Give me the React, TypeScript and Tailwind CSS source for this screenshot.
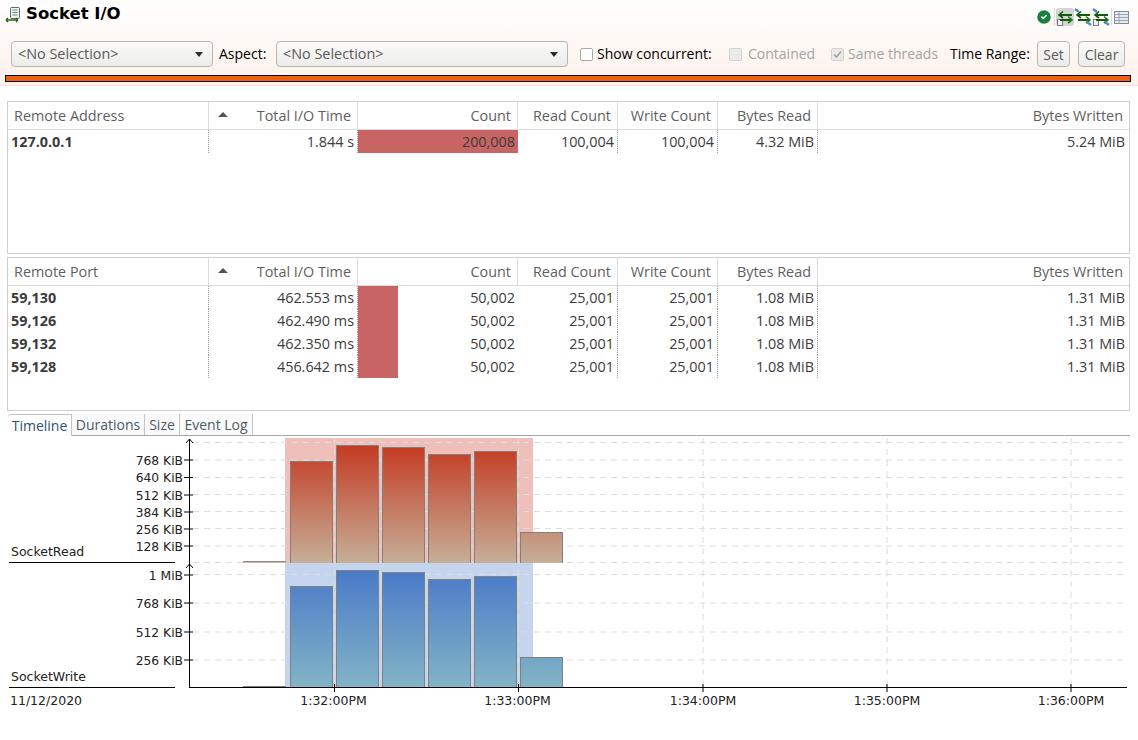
import React from 'react';
import { CheckCircle2 } from 'lucide-react';

const sans = "font-['Open_Sans','Noto_Sans',sans-serif]";

const columns = 'grid grid-cols-[201px_149px_160px_100px_100px_100px_1fr]';

interface Row {
  name: string;
  time: string;
  barWidth: number;
  count: string;
  reads: string;
  writes: string;
  bytesRead: string;
  bytesWritten: string;
}

const addressRows: Row[] = [
  { name: '127.0.0.1', time: '1.844 s', barWidth: 160, count: '200,008', reads: '100,004', writes: '100,004', bytesRead: '4.32 MiB', bytesWritten: '5.24 MiB' },
];

const portRows: Row[] = [
  { name: '59,130', time: '462.553 ms', barWidth: 40, count: '50,002', reads: '25,001', writes: '25,001', bytesRead: '1.08 MiB', bytesWritten: '1.31 MiB' },
  { name: '59,126', time: '462.490 ms', barWidth: 40, count: '50,002', reads: '25,001', writes: '25,001', bytesRead: '1.08 MiB', bytesWritten: '1.31 MiB' },
  { name: '59,132', time: '462.350 ms', barWidth: 40, count: '50,002', reads: '25,001', writes: '25,001', bytesRead: '1.08 MiB', bytesWritten: '1.31 MiB' },
  { name: '59,128', time: '456.642 ms', barWidth: 40, count: '50,002', reads: '25,001', writes: '25,001', bytesRead: '1.08 MiB', bytesWritten: '1.31 MiB' },
];

const HeaderCell: React.FC<{ label: string; left?: boolean; sort?: boolean }> = ({ label, left, sort }) => (
  <div className={`relative flex items-center border-r border-[#dcdcdc] px-[6px] last:border-r-0 ${left ? 'justify-start' : 'justify-end'}`}>
    {sort && <span className="absolute left-[9px] top-[10px] h-0 w-0 border-x-[5px] border-b-[5px] border-x-transparent border-b-[#555]" />}
    {label}
  </div>
);

const DataCell: React.FC<{ children: React.ReactNode; dotted?: boolean }> = ({ children, dotted }) => (
  <div className={`flex items-center justify-end pr-[3px] ${dotted ? 'border-r border-dotted border-[#999]' : 'pr-[4px]'}`}>{children}</div>
);

const DataTable: React.FC<{ first: string; rows: Row[]; height: string }> = ({ first, rows, height }) => (
  <div className={`mx-[7px] w-[1123px] border border-[#cfcfcf] bg-white text-[14.4px] ${height}`}>
    <div className={`${columns} h-[28px] border-b border-[#dcdcdc] text-[#5f5f5f]`}>
      <HeaderCell label={first} left />
      <HeaderCell label="Total I/O Time" sort />
      <HeaderCell label="Count" />
      <HeaderCell label="Read Count" />
      <HeaderCell label="Write Count" />
      <HeaderCell label="Bytes Read" />
      <HeaderCell label="Bytes Written" />
    </div>
    {rows.map((row) => (
      <div key={row.name} className={`${columns} h-[23px] text-[#3c3c3c]`}>
        <div className="flex items-center border-r border-dotted border-[#999] pl-[3px] font-bold">{row.name}</div>
        <DataCell dotted>{row.time}</DataCell>
        <div className="relative flex items-center justify-end pr-[3px]">
          <div className="absolute inset-y-0 left-0 bg-[#c96464]" style={{ width: row.barWidth }} />
          <span className="relative">{row.count}</span>
        </div>
        <DataCell dotted>{row.reads}</DataCell>
        <DataCell dotted>{row.writes}</DataCell>
        <DataCell dotted>{row.bytesRead}</DataCell>
        <DataCell>{row.bytesWritten}</DataCell>
      </div>
    ))}
  </div>
);

const Select: React.FC<{ width: string }> = ({ width }) => (
  <div className={`flex h-[26px] ${width} items-center justify-between rounded-[4px] border border-[#b9b6b2] bg-gradient-to-b from-[#fbfafa] to-[#ececea] pl-[6px] pr-[9px] text-[14.4px] text-[#5a5a5a]`}>
    <span>&lt;No Selection&gt;</span>
    <span className="h-0 w-0 border-x-[4px] border-t-[5px] border-x-transparent border-t-[#2c2c2c]" />
  </div>
);

const Check: React.FC<{ checked?: boolean; disabled?: boolean }> = ({ checked, disabled }) => (
  <span className={`flex h-[13px] w-[13px] items-center justify-center rounded-[2px] border ${disabled ? 'border-[#d4d2d0] bg-[#ebeae9]' : 'border-[#aaa8a6] bg-white'}`}>
    {checked && (
      <svg width="11" height="11" viewBox="0 0 11 11" fill="none" stroke="#a2a2a2" strokeWidth="1.6">
        <path d="M2 5.5 L4.5 8 L9 2.5" />
      </svg>
    )}
  </span>
);

const ToolButton: React.FC<{ label: string; width: string }> = ({ label, width }) => (
  <div className={`flex h-[26px] ${width} items-center justify-center rounded-[4px] border border-[#b9b6b2] bg-gradient-to-b from-[#fbfafa] to-[#ececea] text-[#5a5a5a]`}>{label}</div>
);

const ArrowsIcon: React.FC<{ wand?: boolean; page?: boolean }> = ({ wand, page }) => (
  <svg width="18" height="18" viewBox="0 0 18 18" fill="none">
    {page && <rect x="1.5" y="11.5" width="5" height="6" fill="#f1f1f1" stroke="#7a7a90" />}
    <path d="M4 7 H16 M4 12 H15" stroke="#0f5c0a" strokeWidth="1.8" />
    <path d="M7 3.5 L3 7 L7 10" stroke="#0f5c0a" strokeWidth="1.6" fill="none" />
    <path d="M12 8.5 L16 12 L12 15" stroke="#1d7a12" strokeWidth="1.6" fill="none" />
    {wand && (
      <>
        <path d="M1 1 L5 4" stroke="#4a90c8" strokeWidth="2.4" />
        <path d="M13 14 L17 17" stroke="#4a90c8" strokeWidth="2.4" />
      </>
    )}
  </svg>
);

const PageIcon = () => (
  <svg width="16" height="16" viewBox="0 0 16 16" fill="none">
    <rect x="5.5" y="0.5" width="9" height="11" rx="1" fill="#eef1f4" stroke="#5d6872" />
    <path d="M7.5 3 H12.5 M7.5 5.5 H12.5 M7.5 8 H12.5" stroke="#5f8f62" />
    <path d="M1 13 H9 M1 13 L3 11 M1 13 L3 15 M6 13 H13 M13 13 L11 11 M13 13 L11 15" stroke="#1d6e12" strokeWidth="1.4" />
  </svg>
);

const TableIcon = () => (
  <svg width="15" height="13" viewBox="0 0 15 13" fill="none">
    <rect x="0.5" y="0.5" width="14" height="12" fill="#e8edf3" stroke="#7f8b9a" />
    <path d="M0.5 3.5 H14.5 M0.5 6.5 H14.5 M0.5 9.5 H14.5 M5 0.5 V12.5" stroke="#9aa5b2" />
  </svg>
);

const yTicks = (list: [string, number][]) =>
  list.map(([label, y]) => (
    <g key={label}>
      <line x1="184" x2="193" y1={y} y2={y} stroke="#000" />
      <text x="183" y={y + 4.5} textAnchor="end" fontSize="12.3" fill="#222">{label.trim()}</text>
    </g>
  ));

const Chart = () => {
  const readTops = [461, 445, 447, 454, 451, 532];
  const writeTops = [586, 570, 572, 579, 576, 657];
  const barX = [290, 336, 382, 428, 474, 520];
  const readGrid = [442, 459.5, 477, 494, 511, 528, 545.5, 562];
  const writeGrid = [574, 602.5, 631.5, 659.5];
  const timeX = [[334.5, '1:32:00PM'], [518.5, '1:33:00PM'], [703, '1:34:00PM'], [887, '1:35:00PM'], [1071, '1:36:00PM']] as const;

  return (
    <svg width="1138" height="304" viewBox="0 436 1138 304" className="block" fontFamily="'DejaVu Sans', sans-serif">
      <defs>
        <linearGradient id="readFill" gradientUnits="userSpaceOnUse" x1="0" x2="0" y1="445" y2="562">
          <stop offset="0" stopColor="#c43a22" />
          <stop offset="1" stopColor="#c6ae97" />
        </linearGradient>
        <linearGradient id="writeFill" gradientUnits="userSpaceOnUse" x1="0" x2="0" y1="570" y2="687">
          <stop offset="0" stopColor="#4a7ac8" />
          <stop offset="1" stopColor="#82b4c6" />
        </linearGradient>
      </defs>

      <rect x="285" y="438" width="248" height="125" fill="#efbfb9" />
      <rect x="285" y="563" width="248" height="124" fill="#c5d5ee" />

      {[...readGrid, ...writeGrid].map((y) => (
        <line key={y} x1="193" x2="1127" y1={y + 0.5} y2={y + 0.5} stroke="#dcdcdc" strokeDasharray="6 5" />
      ))}
      {timeX.map(([x]) => (
        <line key={x} x1={x} x2={x} y1="438" y2="687" stroke="#dcdcdc" strokeDasharray="6 5" />
      ))}

      <rect x="243" y="561" width="43" height="1" fill="#8a8a8a" />
      <rect x="243" y="562" width="43" height="1" fill="#d2b8a0" />
      <rect x="243" y="686" width="43" height="1" fill="#808080" />

      {barX.map((x, i) => (
        <rect key={x} x={x + 0.5} y={readTops[i] + 0.5} width="42" height={563 - readTops[i]} fill="url(#readFill)" stroke="#808080" />
      ))}
      <rect x="285" y="563" width="248" height="1" fill="#c5d5ee" />
      <rect x="533" y="563" width="32" height="1" fill="#fff" />
      {barX.map((x, i) => (
        <rect key={x} x={x + 0.5} y={writeTops[i] + 0.5} width="42" height={687 - writeTops[i]} fill="url(#writeFill)" stroke="#808080" />
      ))}

      <line x1="189.5" x2="189.5" y1="439" y2="687" stroke="#000" />
      <path d="M186 443 L189.5 439 L193 443" fill="none" stroke="#000" />
      <path d="M186 568 L189.5 564 L193 568" fill="none" stroke="#000" />
      {yTicks([['768 KiB', 460], ['640 KiB', 477.5], ['512 KiB', 495], ['384 KiB', 512], ['256 KiB', 529], ['128 KiB', 546]])}
      {yTicks([['1 MiB', 575], ['768 KiB ', 603], ['512 KiB ', 632], ['256 KiB ', 660]])}

      <line x1="9" x2="175" y1="562.5" y2="562.5" stroke="#000" />
      <line x1="9" x2="175" y1="687.5" y2="687.5" stroke="#000" />
      <line x1="189" x2="1127" y1="687.5" y2="687.5" stroke="#000" />
      <text x="11" y="556" fontSize="12.5" fill="#222">SocketRead</text>
      <text x="11" y="681" fontSize="12.5" fill="#222">SocketWrite</text>
      <text x="10" y="705" fontSize="12.5" fill="#222">11/12/2020</text>

      {timeX.map(([x, label]) => (
        <g key={x}>
          <line x1={x} x2={x} y1="684" y2="692" stroke="#000" />
          <text x={x < 600 ? x - 1 : x} y="705" textAnchor="middle" fontSize="12.5" fill="#222">{label}</text>
        </g>
      ))}
    </svg>
  );
};

const tabs = [
  { label: 'Timeline', width: 'w-[64px]', active: true },
  { label: 'Durations', width: 'w-[73px]' },
  { label: 'Size', width: 'w-[35px]' },
  { label: 'Event Log', width: 'w-[73px]' },
];

export default function App() {
  return (
    <div className={`h-[740px] w-[1138px] overflow-hidden bg-white text-[14px] ${sans}`}>
      <div className="h-[86px] border-b border-[#f6dfd0] bg-gradient-to-b from-white to-[#fdf1eb]">
        <div className="flex h-[30px] items-center justify-between pl-[5px] pr-[9px]">
          <div className="flex items-center gap-[5px]">
            <PageIcon />
            <span className="-mt-[2px] font-['DejaVu_Sans',sans-serif] text-[16.5px] font-bold leading-none text-black">Socket I/O</span>
          </div>
          <div className="mt-[4px] flex items-center">
            <CheckCircle2 size={18} className="fill-[#17803a] text-white" />
            <div className="mx-[1px] h-[18px] w-px bg-[#dcdcdc]" />
            <div className="flex h-[18px] items-center rounded-[3px] bg-[#d4d4d4]"><ArrowsIcon page /></div>
            <ArrowsIcon wand />
            <ArrowsIcon wand page />
            <div className="ml-[1px] mr-[2px] h-[18px] w-px bg-[#dcdcdc]" />
            <TableIcon />
          </div>
        </div>
        <div className="mt-[11px] flex items-center pl-[11px] text-black">
          <Select width="w-[202px]" />
          <span className="ml-[6px] -mt-[2px] w-[51px]">Aspect:</span>
          <div className="ml-[6px]"><Select width="w-[292px]" /></div>
          <div className="ml-[12px]"><Check /></div>
          <span className="ml-[4px] -mt-[2px] w-[116px]">Show concurrent:</span>
          <div className="ml-[16px]"><Check disabled /></div>
          <span className="ml-[6px] -mt-[2px] w-[66px] text-[#a3a3a3]">Contained</span>
          <div className="ml-[17px]"><Check disabled checked /></div>
          <span className="ml-[4px] -mt-[2px] w-[92px] whitespace-nowrap text-[#a3a3a3]">Same threads</span>
          <span className="ml-[10px] -mt-[2px] w-[81px] whitespace-nowrap">Time Range:</span>
          <div className="ml-[6px]"><ToolButton label="Set" width="w-[33px]" /></div>
          <div className="ml-[8px]"><ToolButton label="Clear" width="w-[47px]" /></div>
        </div>
        <div className="mx-[5px] mt-[8px] h-[7px] w-[1126px] border border-black bg-[#ef5f0c]" />
      </div>

      <div className="h-[15px]" />
      <DataTable first="Remote Address" rows={addressRows} height="h-[153px]" />
      <div className="h-[3px]" />
      <DataTable first="Remote Port" rows={portRows} height="h-[154px]" />

      <div className="mx-[8px] mt-[3px] flex h-[22px] w-[1122px] border-b border-[#a8a8a8] text-[#4d5a66]">
        {tabs.map((tab) => (
          <div
            key={tab.label}
            className={`flex items-center justify-center border-r border-[#c4c4c4] ${tab.width} ${tab.active ? 'h-[22px] rounded-tl-[3px] border-t bg-white text-[#33506e]' : 'h-[21px] bg-[#fafafa]'}`}
          >
            {tab.label}
          </div>
        ))}
      </div>

      <Chart />
    </div>
  );
}
